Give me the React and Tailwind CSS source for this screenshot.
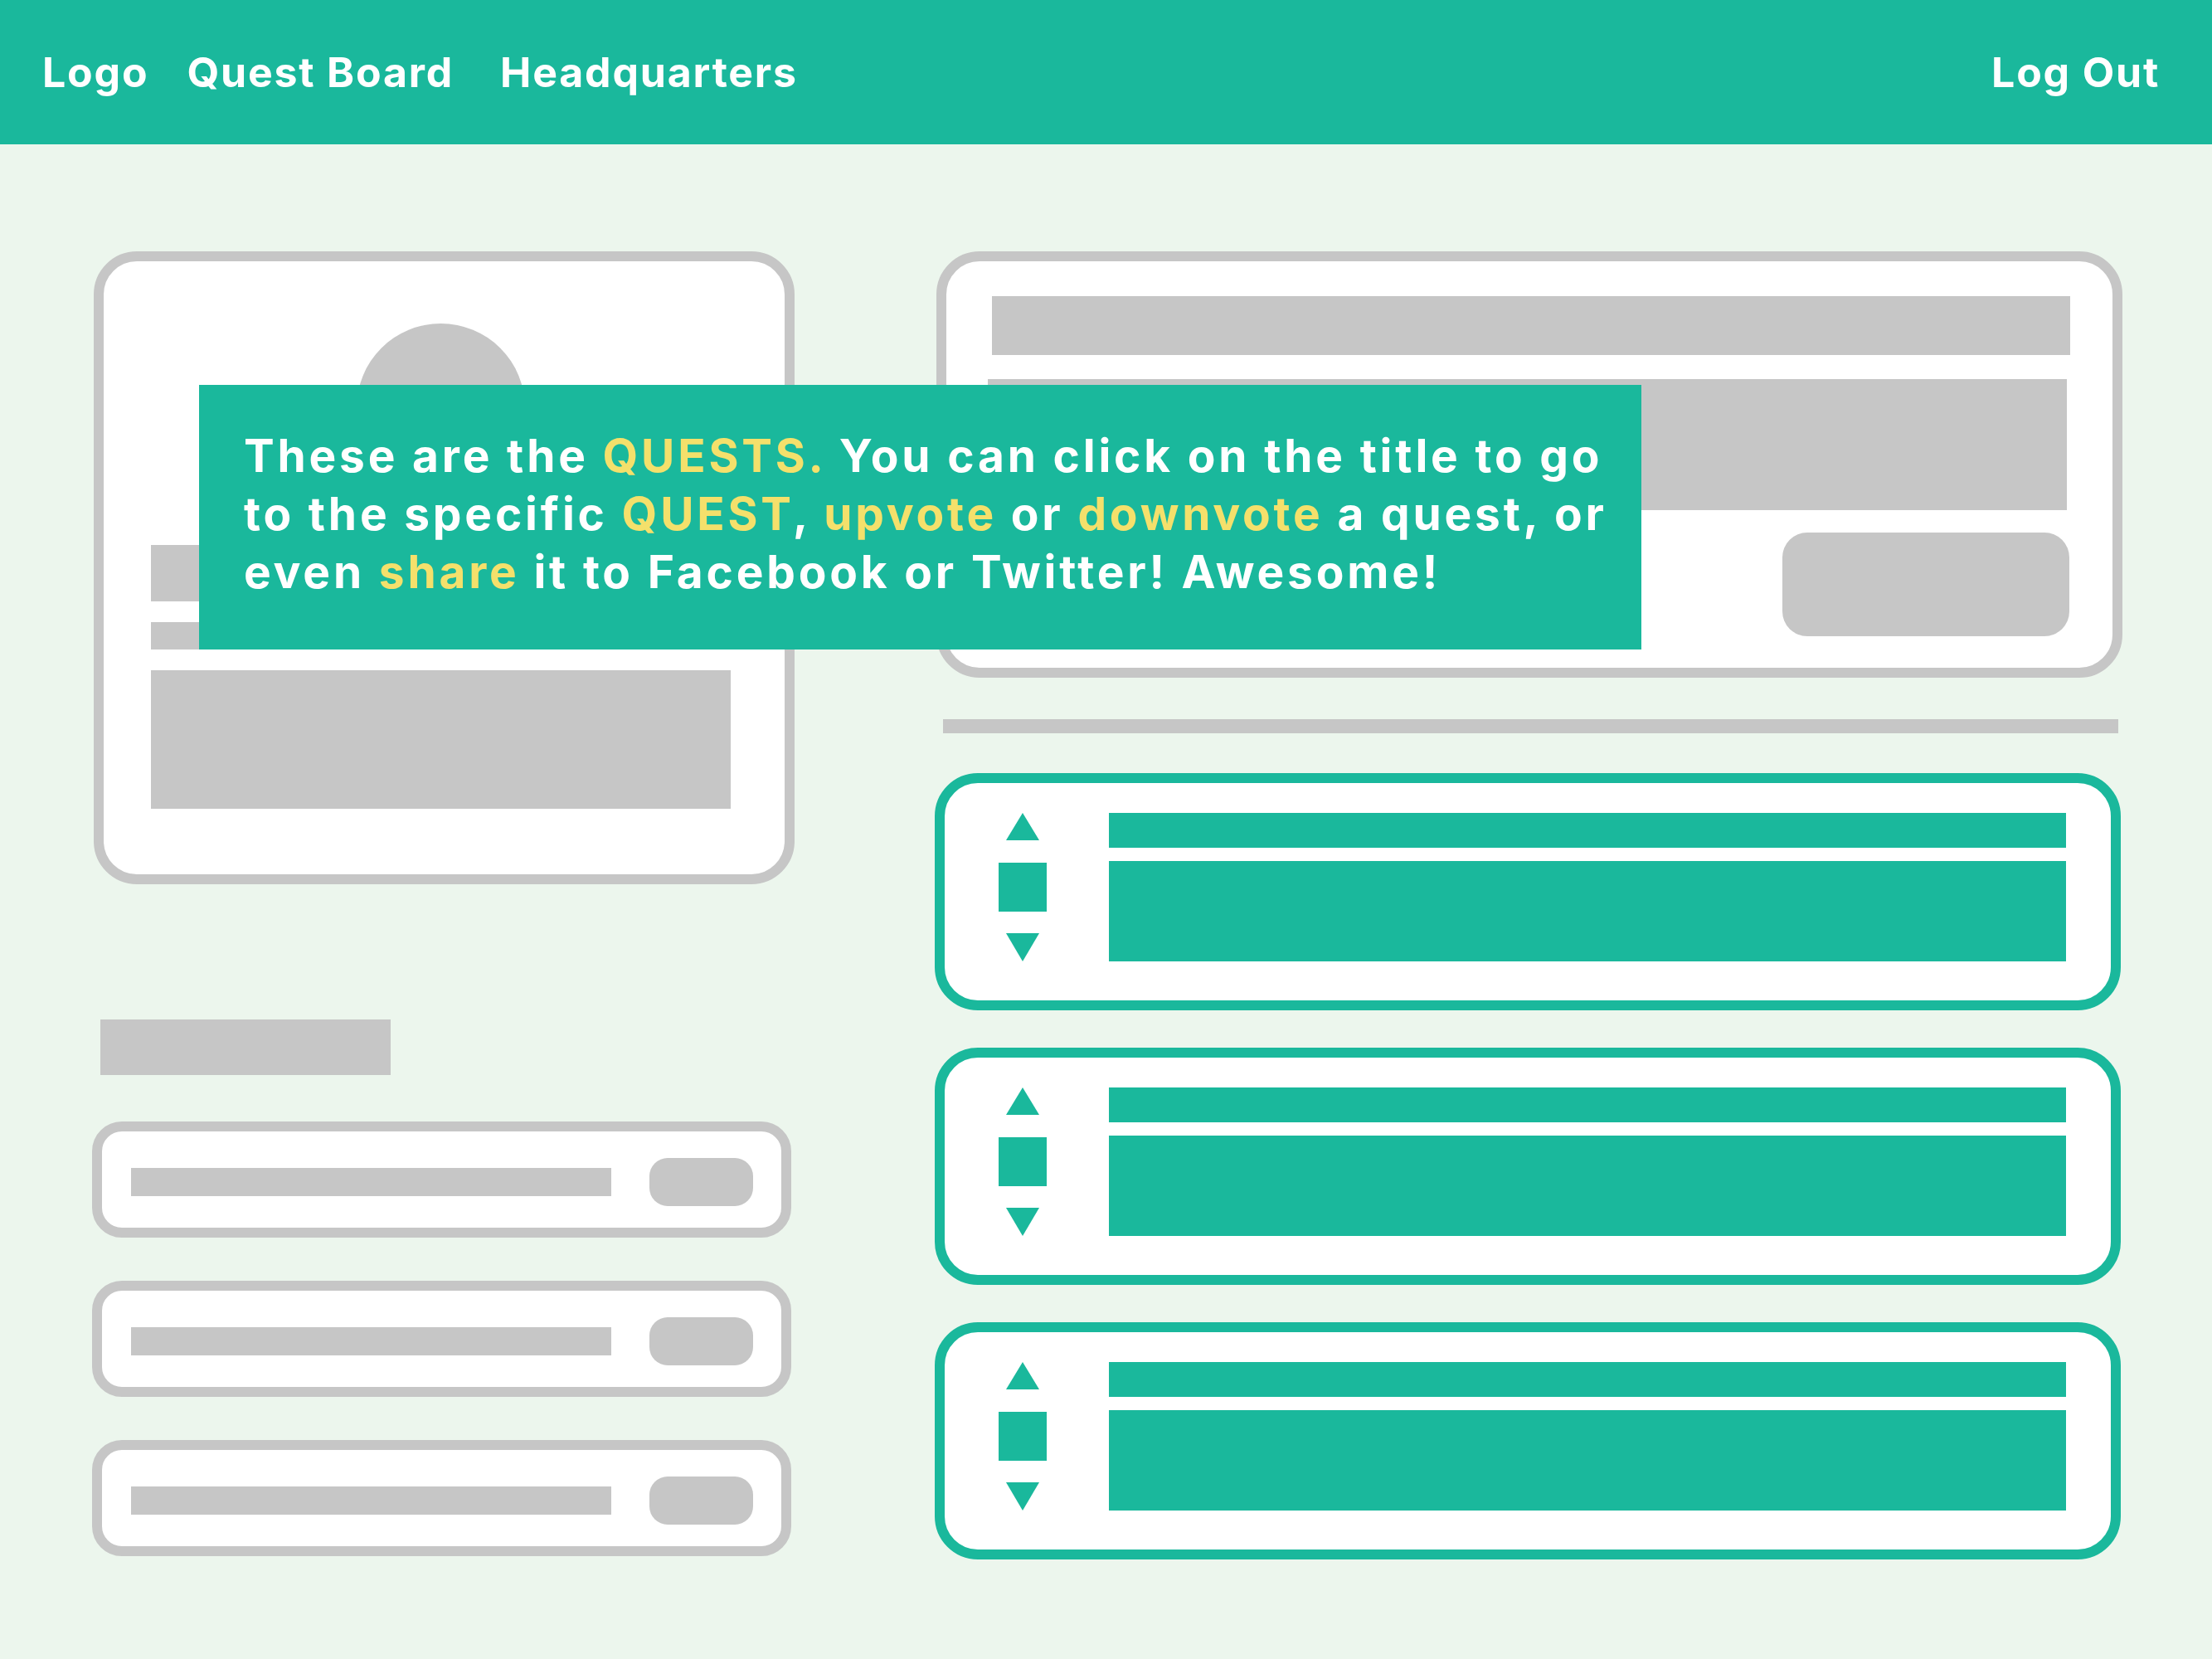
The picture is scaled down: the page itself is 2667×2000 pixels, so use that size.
import React from "react";

const teal = "bg-[#1ab89c]";

const UpArrow = () => (
  <svg width="40" height="33" viewBox="0 0 40 33">
    <polygon points="20,0 40,33 0,33" fill="#1ab89c" />
  </svg>
);

const DownArrow = () => (
  <svg width="40" height="34" viewBox="0 0 40 34">
    <polygon points="0,0 40,0 20,34" fill="#1ab89c" />
  </svg>
);

const QuestCard = () => (
  <div className="w-[1430px] h-[286px] rounded-[52px] border-[12px] border-[#1ab89c] bg-white flex pl-[65px] pt-[36px]">
    <div className="w-[58px] h-[179px] flex flex-col items-center justify-between">
      <UpArrow />
      <div className={`w-[58px] h-[59px] ${teal}`} />
      <DownArrow />
    </div>
    <div className="ml-[75px] flex flex-col gap-[16px]">
      <div className={`w-[1154px] h-[42px] ${teal}`} />
      <div className={`w-[1154px] h-[121px] ${teal}`} />
    </div>
  </div>
);

const SmallCard = () => (
  <div className="w-[843px] h-[140px] rounded-[36px] border-[12px] border-[#c6c6c6] bg-white flex items-center pl-[35px]">
    <div className="w-[579px] h-[34px] bg-[#c6c6c6] mt-[6px]" />
    <div className="ml-[46px] w-[125px] h-[58px] rounded-[22px] bg-[#c6c6c6] mt-[6px]" />
  </div>
);

const Highlight = ({ children }) => <span className="text-[#f4e06b]">{children}</span>;

export default function App() {
  return (
    <div className="w-[2667px] h-[2000px] bg-[#ecf6ed] font-['Inter','Liberation_Sans',sans-serif] overflow-hidden">
      <header className={`h-[174px] ${teal} flex items-center justify-between pl-[51px] pr-[63px] text-white font-bold text-[50px] tracking-[1.8px]`}>
        <nav className="flex items-center gap-[46px]">
          <span>Logo</span>
          <span>Quest Board</span>
          <span className="ml-[10px]">Headquarters</span>
        </nav>
        <span>Log Out</span>
      </header>

      <main className="relative flex pt-[129px] pl-[113px] gap-[171px]">
        {/* left column */}
        <div className="w-[845px] flex flex-col">
          <div className="h-[763px] rounded-[52px] border-[12px] border-[#c6c6c6] bg-white pt-[75px] pl-[57px]">
            <div className="w-[203px] h-[203px] rounded-full bg-[#c6c6c6] ml-[248px]" />
            <div className="mt-[64px] w-[560px] h-[68px] bg-[#c6c6c6]" />
            <div className="mt-[25px] w-[420px] h-[33px] bg-[#c6c6c6]" />
            <div className="mt-[25px] w-[699px] h-[167px] bg-[#c6c6c6]" />
          </div>
          <div className="mt-[163px] ml-[8px] w-[350px] h-[67px] bg-[#c6c6c6]" />
          <div className="mt-[56px] -ml-[2px] flex flex-col gap-[52px]">
            <SmallCard />
            <SmallCard />
            <SmallCard />
          </div>
        </div>

        {/* right column */}
        <div className="w-[1430px] flex flex-col">
          <div className="h-[514px] rounded-[52px] border-[12px] border-[#c6c6c6] bg-white pt-[42px] pl-[55px] flex flex-col">
            <div className="w-[1300px] h-[71px] bg-[#c6c6c6]" />
            <div className="mt-[29px] -ml-[5px] w-[1301px] h-[158px] bg-[#c6c6c6]" />
            <div className="mt-[27px] ml-[953px] w-[346px] h-[125px] rounded-[30px] bg-[#c6c6c6]" />
          </div>
          <div className="mt-[50px] ml-[8px] w-[1417px] h-[17px] bg-[#c6c6c6]" />
          <div className="mt-[48px] -ml-[2px] flex flex-col gap-[45px]">
            <QuestCard />
            <QuestCard />
            <QuestCard />
          </div>
        </div>

        {/* tooltip */}
        <div className={`absolute left-[240px] top-[290px] w-[1739px] h-[319px] ${teal} pl-[54px] pt-[50px] text-white font-bold text-[55px] leading-[70px] tracking-[3.8px] whitespace-nowrap`}>
          These are the <Highlight>QUESTS.</Highlight> You can click on the title to go
          <br />
          to the specific <Highlight>QUEST</Highlight>, <Highlight>upvote</Highlight> or{" "}
          <Highlight>downvote</Highlight> a quest, or
          <br />
          even <Highlight>share</Highlight> it to Facebook or Twitter! Awesome!
        </div>
      </main>
    </div>
  );
}
